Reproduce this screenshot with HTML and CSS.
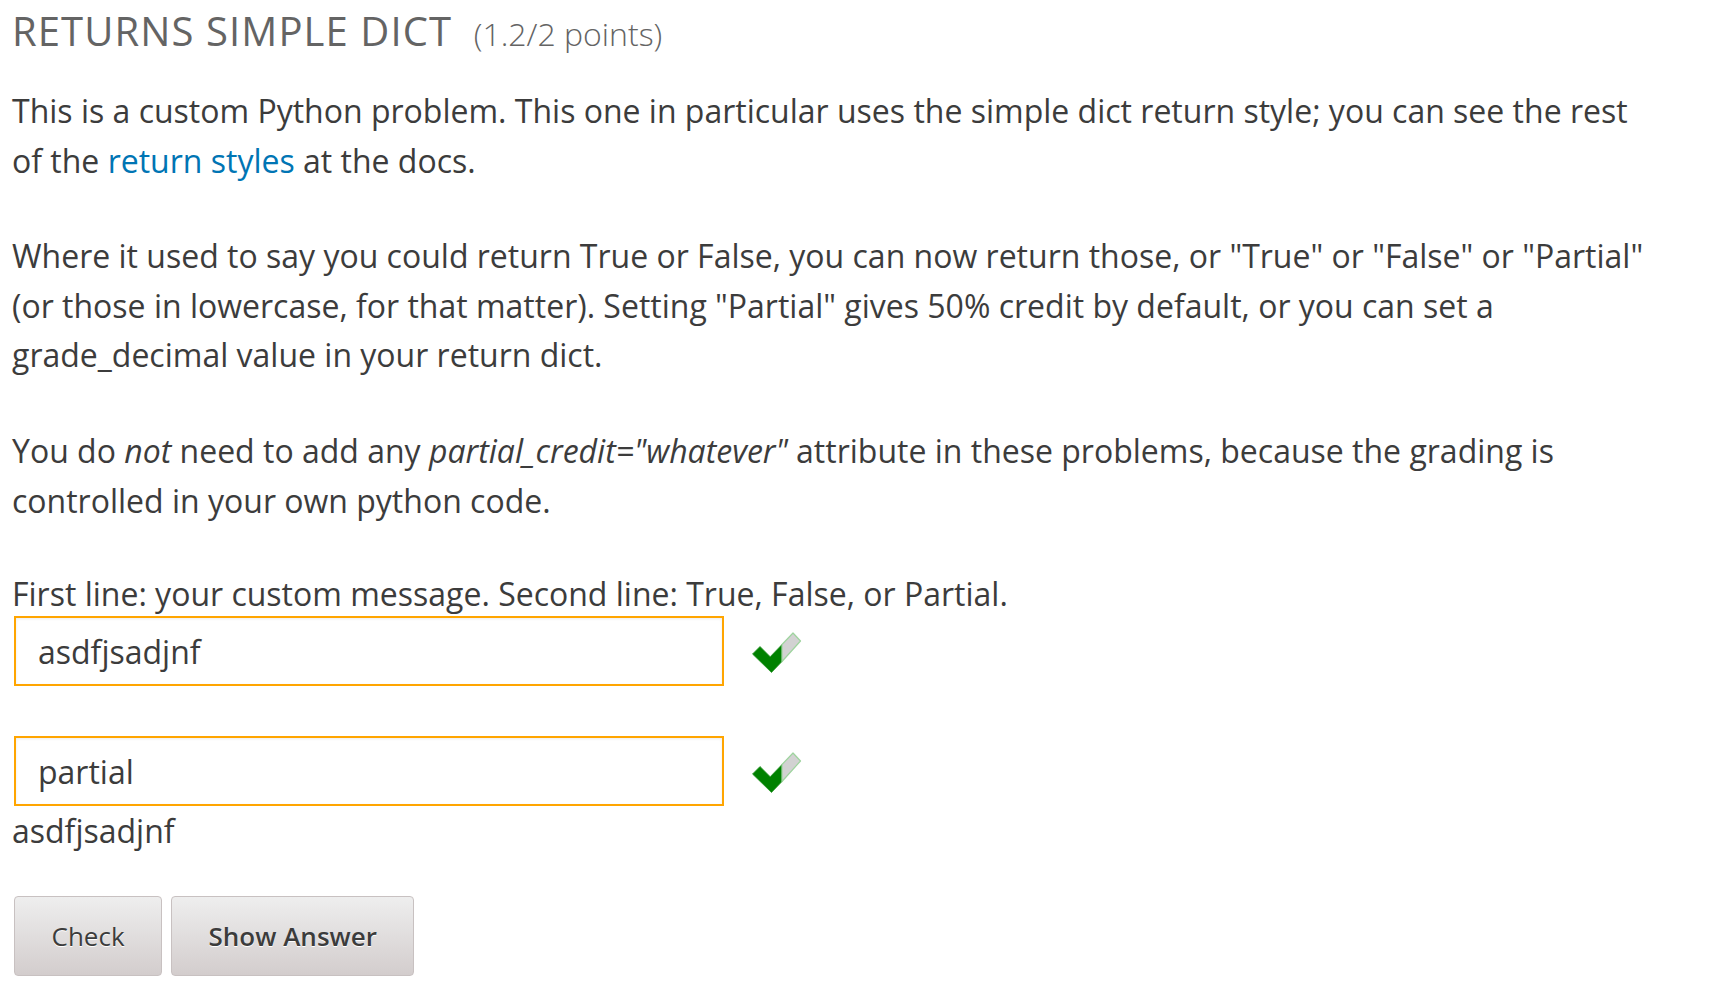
FILE: index.html
```html
<!DOCTYPE html>
<html lang="en">
<head>
<meta charset="utf-8">
<title>Returns simple dict</title>
<link rel="stylesheet" href="styles.css">
</head>
<body>
<div class="problem">
  <h2 class="title">RETURNS SIMPLE DICT <span class="points">(1.2/2 points)</span></h2>
  <p>This is a custom Python problem. This one in particular uses the simple dict return style; you can see the rest of the <a href="#">return styles</a> at the docs.</p>
  <p>Where it used to say you could return True or False, you can now return those, or "True" or "False" or "Partial" (or those in lowercase, for that matter). Setting "Partial" gives 50% credit by default, or you can set a grade_decimal value in your return dict.</p>
  <p>You do <em>not</em> need to add any <em>partial_credit="whatever"</em> attribute in these problems, because the grading is controlled in your own python code.</p>
  <p class="label">First line: your custom message. Second line: True, False, or Partial.</p>
  <div class="field">
    <input class="answer" type="text" value="asdfjsadjnf">
    <svg class="check" width="52" height="46" viewBox="0 0 52 46" aria-label="correct">
      <path d="M2.5 26 L10 18.5 L20.2 28.7 L32 16.5 L32 33.5 L21.5 44.5 Z" fill="#008100" stroke="#2f962f" stroke-width="0.8" stroke-linejoin="round"/>
      <path d="M32 16.5 L43 5 L50.5 13 L32 33.5 Z" fill="#d2d2d2" stroke="#9ed49e" stroke-width="1.2" stroke-linejoin="round"/>
    </svg>
  </div>
  <div class="field second">
    <input class="answer" type="text" value="partial">
    <svg class="check" width="52" height="46" viewBox="0 0 52 46" aria-label="correct">
      <path d="M2.5 26 L10 18.5 L20.2 28.7 L32 16.5 L32 33.5 L21.5 44.5 Z" fill="#008100" stroke="#2f962f" stroke-width="0.8" stroke-linejoin="round"/>
      <path d="M32 16.5 L43 5 L50.5 13 L32 33.5 Z" fill="#d2d2d2" stroke="#9ed49e" stroke-width="1.2" stroke-linejoin="round"/>
    </svg>
  </div>
  <div class="message">asdfjsadjnf</div>
  <div class="actions">
    <button class="btn" type="button">Check</button>
    <button class="btn strong" type="button">Show Answer</button>
  </div>
</div>
</body>
</html>
```

FILE: styles.css
```css
html, body {
  margin: 0;
  padding: 0;
  background: #ffffff;
}

body {
  font-family: "Open Sans", "Noto Sans", sans-serif;
  color: #3c3c3c;
}

.problem {
  width: 1652px;
  padding: 7px 0 0 12px;
}

.title {
  margin: 0 0 29px;
  font-size: 40px;
  line-height: 47px;
  font-weight: 400;
  letter-spacing: 1.1px;
  color: #646464;
}

.points {
  font-size: 32px;
  letter-spacing: 0;
  font-weight: 300;
  margin-left: 10px;
}

p {
  margin: 0 0 46px;
  font-size: 32px;
  line-height: 49.6px;
}

a {
  color: #0075b4;
  text-decoration: none;
}

.label {
  margin-bottom: 0;
  line-height: 45px;
}

.field {
  display: flex;
  align-items: center;
  gap: 26px;
}

.field.second {
  margin-top: 50px;
}

.answer {
  box-sizing: border-box;
  width: 710px;
  height: 70px;
  margin: 0 0 0 2px;
  padding: 0 22px;
  border: 2px solid #ffa500;
  border-radius: 0;
  background: #fff;
  box-shadow: inset 0 1px 3px rgba(0, 0, 0, 0.08);
  font-family: inherit;
  font-size: 32px;
  color: #3c3c3c;
  outline: none;
}

.check {
  display: block;
}

.message {
  font-size: 32px;
  line-height: 49.6px;
}

.actions {
  display: flex;
  gap: 9px;
  margin-top: 40px;
  padding-left: 2px;
}

.btn {
  box-sizing: border-box;
  height: 80px;
  padding: 0 36.5px;
  border: 1px solid #c8c1c1;
  border-radius: 4px;
  background: linear-gradient(#eeeeee, #d3cdcd);
  font-family: inherit;
  font-size: 26px;
  color: #3c3c3c;
  text-shadow: 0 1px 0 #ffffff;
  cursor: pointer;
}

.btn.strong {
  font-weight: 600;
}
```
